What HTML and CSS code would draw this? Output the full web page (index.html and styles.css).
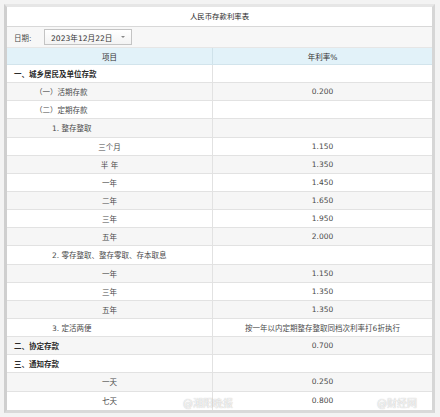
FILE: index.html
```html
<!DOCTYPE html>
<html lang="zh">
<head>
<meta charset="utf-8">
<link rel="stylesheet" href="styles.css">
</head>
<body>
<div class="frame">
  <div class="panel">
    <div class="title">人民币存款利率表</div>
    <div class="datebar">
      <span class="label">日期:</span>
      <div class="select"><span>2023年12月22日</span><span class="arrow"></span></div>
    </div>
    <div class="grid">
      <div class="row head"><div class="c1">项目</div><div class="c2">年利率%</div></div>
      <div class="row"><div class="c1 l0 b">一、城乡居民及单位存款</div><div class="c2"></div></div>
      <div class="row alt"><div class="c1 l1">（一）活期存款</div><div class="c2">0.200</div></div>
      <div class="row"><div class="c1 l1">（二）定期存款</div><div class="c2"></div></div>
      <div class="row alt"><div class="c1 l2">1. 整存整取</div><div class="c2"></div></div>
      <div class="row"><div class="c1 ctr">三个月</div><div class="c2">1.150</div></div>
      <div class="row alt"><div class="c1 ctr">半 年</div><div class="c2">1.350</div></div>
      <div class="row"><div class="c1 ctr">一年</div><div class="c2">1.450</div></div>
      <div class="row alt"><div class="c1 ctr">二年</div><div class="c2">1.650</div></div>
      <div class="row"><div class="c1 ctr">三年</div><div class="c2">1.950</div></div>
      <div class="row alt"><div class="c1 ctr">五年</div><div class="c2">2.000</div></div>
      <div class="row"><div class="c1 l2">2. 零存整取、整存零取、存本取息</div><div class="c2"></div></div>
      <div class="row alt"><div class="c1 ctr">一年</div><div class="c2">1.150</div></div>
      <div class="row"><div class="c1 ctr">三年</div><div class="c2">1.350</div></div>
      <div class="row alt"><div class="c1 ctr">五年</div><div class="c2">1.350</div></div>
      <div class="row"><div class="c1 l2">3. 定活两便</div><div class="c2">按一年以内定期整存整取同档次利率打6折执行</div></div>
      <div class="row alt"><div class="c1 l0 b">二、协定存款</div><div class="c2">0.700</div></div>
      <div class="row"><div class="c1 l0 b">三、通知存款</div><div class="c2"></div></div>
      <div class="row alt"><div class="c1 ctr">一天</div><div class="c2">0.250</div></div>
      <div class="row last"><div class="c1 ctr">七天</div><div class="c2">0.800</div></div>
    </div>
  </div>
  <div class="wm wm1">@湘阳晚报</div>
  <div class="wm wm2">@财经网</div>
</div>
</body>
</html>
```

FILE: styles.css
```css
html, body {
  margin: 0;
  padding: 0;
  background: #f3f3f3;
}
body {
  width: 440px;
  height: 417px;
  overflow: hidden;
  font-family: "DejaVu Sans", "Noto Sans CJK SC", sans-serif;
  font-size: 7.5px;
  color: #4a4a4a;
}
.frame {
  position: relative;
  margin: 4px 0 0 4px;
  width: 425px;
  border-left: 3px solid #cfcfcf;
  border-top: 3px solid #e6e6e6;
  border-right: 3px solid #d6d6d6;
  border-bottom: 3px solid #d9d9d9;
}
.panel {
  background: #fff;
}
.title {
  height: 19px;
  line-height: 19px;
  border-bottom: 1px solid #d8d8d8;
  text-align: center;
  color: #2a2a2a;
  font-size: 7.4px;
}
.datebar {
  height: 21px;
  background: #f7f7f7;
  display: flex;
  align-items: center;
  padding-left: 7px;
  box-sizing: border-box;
  border-bottom: 1px solid #e6e6e6;
}
.label {
  color: #4a4a4a;
  width: 30px;
}
.select {
  width: 88px;
  height: 16px;
  box-sizing: border-box;
  border: 1px solid #c4c4c4;
  background: linear-gradient(#ffffff, #f3f3f3);
  display: flex;
  align-items: center;
  padding-left: 6px;
  color: #333;
  font-size: 7.6px;
}
.arrow {
  margin-left: auto;
  margin-right: 6px;
  width: 0;
  height: 0;
  border-left: 2px solid transparent;
  border-right: 2px solid transparent;
  border-top: 2px solid #888;
}
.grid {
  display: flex;
  flex-direction: column;
}
.row {
  display: grid;
  grid-template-columns: 206px 219px;
  height: 18.15px;
  box-sizing: border-box;
  border-bottom: 1px solid #e2e2e2;
  background: #fff;
}
.row.alt {
  background: #f6f6f6;
}
.row.head {
  height: 17px;
  background: #e2f2f9;
  border-bottom: 1px solid #d2e4ec;
  color: #333;
}
.row.last {
  border-bottom: none;
}
.c1, .c2 {
  display: flex;
  align-items: center;
  white-space: nowrap;
}
.c1 {
  border-right: 1px solid #e2e2e2;
}
.head .c1 {
  border-right-color: #cfe2ea;
  justify-content: center;
}
.c2 {
  justify-content: center;
}
.ctr {
  justify-content: center;
}
.l0 { padding-left: 7px; }
.l1 { padding-left: 28px; }
.l2 { padding-left: 45px; }
.b {
  color: #2b2b2b;
  font-weight: bold;
}
.wm {
  position: absolute;
  font-size: 10px;
  color: rgba(255, 255, 255, 0.85);
  text-shadow: 0 0 1px rgba(0, 0, 0, 0.35);
  white-space: nowrap;
}
.wm1 { left: 176px; top: 388px; }
.wm2 { left: 370px; top: 388px; }
```
